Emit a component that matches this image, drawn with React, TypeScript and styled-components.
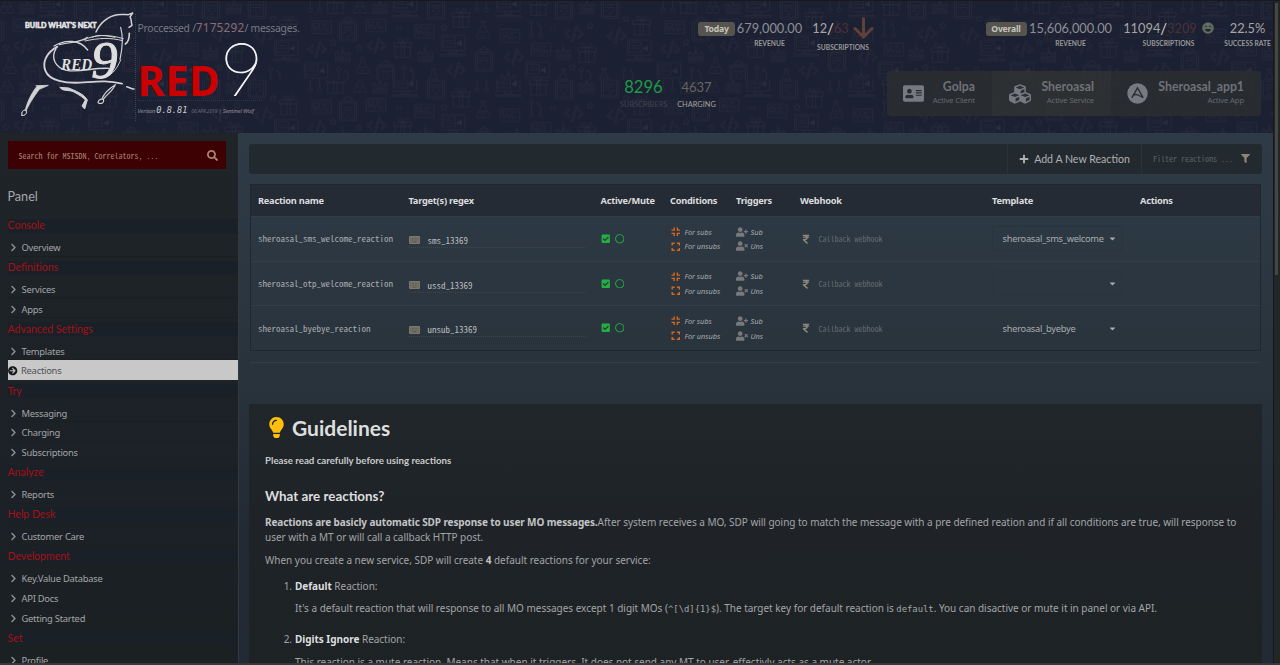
import React from "react";
import styled, { createGlobalStyle } from "styled-components";
import {
  FaAddressCard,
  FaArrowCircleRight,
  FaCaretDown,
  FaCheckSquare,
  FaChevronRight,
  FaCubes,
  FaFilter,
  FaLightbulb,
  FaPlus,
  FaRegCircle,
  FaRupeeSign,
  FaSearch,
  FaUserPlus,
  FaUserTimes,
} from "react-icons/fa";

const sans = `"Noto Sans", "Open Sans", sans-serif`;
const lato = `Lato, "Noto Sans", sans-serif`;
const mono = `"Noto Sans Mono CJK SC", "Liberation Mono", monospace`;

const GlobalStyle = createGlobalStyle`
  * { box-sizing: border-box; }
  html, body { margin: 0; padding: 0; background: #1c2124; overflow: hidden; }
  body { font-family: ${sans}; font-size: 10px; color: #a3a5a7; }
  p, h1, h2, h3, ol { margin: 0; padding: 0; font-weight: inherit; }
`;

/* ---------- frame ---------- */

const Frame = styled.div`
  width: 1280px;
  height: 665px;
  display: grid;
  grid-template-columns: 1273px 7px;
  overflow: hidden;
  border-top: 1px solid #17191d;
  border-bottom: 2px solid #34383a;
`;

const Page = styled.div`
  display: flex;
  flex-direction: column;
  min-height: 0;
  overflow: hidden;
`;

const ScrollTrack = styled.div`
  background: #222624;
  border-left: 1px solid #14171c;
  padding: 2px 0 0 1px;
`;

const ScrollThumb = styled.div`
  width: 2.5px;
  height: 272px;
  background: #464743;
`;

/* ---------- header ---------- */

const Header = styled.header`
  position: relative;
  height: 132px;
  flex: none;
  display: flex;
  background: #1b2033;
  overflow: hidden;
  font-family: ${lato};
`;

const Backdrop = styled.svg`
  position: absolute;
  inset: 0;
`;

const Logo = styled.svg`
  position: relative;
  width: 135px;
  height: 132px;
  flex: none;
`;

const Brand = styled.div`
  position: relative;
  width: 200px;
  flex: none;
  margin-top: 13px;
  height: 107px;
  border-left: 1px dotted #3f4452;
  padding-left: 1.5px;
`;

const Processed = styled.div`
  font-family: ${sans};
  font-size: 10.4px;
  letter-spacing: -0.25px;
  line-height: 14px;
  padding-top: 5.5px;
  height: 25px;
  color: #777a83;
  white-space: nowrap;
  b {
    font-weight: 400;
    font-size: 11.8px;
    letter-spacing: 0.2px;
    color: #8b6c76;
  }
`;

const Wordmark = styled.div`
  display: flex;
  align-items: baseline;
  width: 124px;
  height: 62px;
  border-bottom: 1px dotted #323747;
  line-height: 57px;
  font-family: ${sans};
  font-size: 41.6px;
  letter-spacing: 0.5px;
  font-weight: 700;
  color: #cc0000;
  span {
    margin-left: 0;
    font-family: ${lato};
    font-size: 75px;
    font-weight: 100;
    color: #f4f4f6;
    -webkit-text-stroke: 0.8px #f4f4f6;
  }
`;

const Version = styled.div`
  margin-top: 3.5px;
  display: flex;
  align-items: baseline;
  font-family: ${sans};
  font-size: 5.9px;
  font-style: italic;
  letter-spacing: -0.2px;
  color: #8d8f96;
  white-space: nowrap;
  b {
    margin: 0 4px 0 1px;
    font: italic 400 8.6px "DejaVu Sans Mono", monospace;
    letter-spacing: 0;
    color: #d0d0d4;
  }
  small {
    margin-right: 1px;
    font-size: 5.1px;
    color: #676a74;
  }
`;

const Totals = styled.div`
  position: relative;
  flex: none;
  width: 101px;
  margin: 76px 0 0 280px;
  display: flex;
  gap: 6px;
`;

const Total = styled.div<{ $size: number; $color: string; $label: string; $w: number }>`
  width: ${(p) => p.$w}px;
  display: flex;
  flex-direction: column;
  align-items: center;
  font-size: ${(p) => p.$size}px;
  line-height: 20px;
  color: ${(p) => p.$color};
  small {
    font-size: 7.4px;
    line-height: 15px;
    color: ${(p) => p.$label};
  }
`;

const Overviews = styled.div`
  position: relative;
  flex: none;
  width: 575px;
  margin-left: -18px;
  padding-top: 17px;
`;

const StatsRow = styled.div`
  display: flex;
  height: 53px;
  align-items: flex-start;
`;

const StatGroup = styled.div`
  display: flex;
  width: 288px;
`;

const Badge = styled.span<{ $w: number }>`
  width: ${(p) => p.$w}px;
  height: 14px;
  margin: 4px 2px 0 0;
  border-radius: 3px;
  background: #56544e;
  color: #c6c4be;
  font: 700 8.6px/14px ${sans};
  letter-spacing: -0.2px;
  text-align: center;
`;

const Stat = styled.div<{ $w: number; $gap?: number; $drop?: number }>`
  width: ${(p) => p.$w}px;
  margin-left: ${(p) => p.$gap ?? 0}px;
  display: flex;
  flex-direction: column;
  align-items: center;
  font-size: 12.8px;
  line-height: 20px;
  color: #8d8f94;
  white-space: nowrap;
  small {
    margin-top: ${(p) => p.$drop ?? 0}px;
    font-size: 6.7px;
    font-weight: 700;
    line-height: 10px;
    color: #999997;
  }
`;

const Figures = styled.span<{ $muted?: string }>`
  display: flex;
  align-items: center;
  height: 20px;
  color: #a8a6a0;
  i {
    font-style: normal;
    font-size: 15px;
    color: #cfccc4;
  }
  em {
    font-style: normal;
    color: ${(p) => p.$muted ?? "#4b3136"};
  }
`;

const Crumbs = styled.div`
  display: grid;
  grid-template-columns: 105px 119px 150px;
  width: 374px;
  height: 45px;
  margin-left: 189px;
  border-radius: 3px;
  overflow: hidden;
  background: rgba(44, 46, 48, 0.8);
`;

const Crumb = styled.div<{ $lit?: boolean; $inset?: number }>`
  position: relative;
  display: flex;
  align-items: center;
  justify-content: space-between;
  padding: 0 17px 0 ${(p) => p.$inset ?? 16}px;
  background: ${(p) => (p.$lit ? "rgba(60, 60, 58, 0.3)" : "transparent")};
  color: #777a81;
  & + &::before {
    content: "";
    position: absolute;
    left: -4px;
    top: 18px;
    width: 8px;
    height: 8px;
    transform: rotate(45deg);
    background: #292c31;
    border: solid #35373a;
    border-width: 1px 1px 0 0;
  }
`;

const CrumbText = styled.div`
  display: flex;
  flex-direction: column;
  align-items: flex-end;
  margin-bottom: 2px;
  font-size: 12.3px;
  line-height: 15px;
  font-weight: 700;
  color: #6f7277;
  small {
    font: 400 7.7px/13px ${sans};
    letter-spacing: -0.15px;
    color: #66696e;
  }
`;

/* ---------- sidebar ---------- */

const Body = styled.div`
  flex: 1;
  min-height: 0;
  display: flex;
`;

const Sidebar = styled.aside`
  width: 239px;
  flex: none;
  padding: 8px 0 0 7.5px;
  background: linear-gradient(#1e2427, #1b2126 70%, #1b2022);
  border-right: 1px solid #33393d;
  overflow: hidden;
`;

const SearchBox = styled.div`
  display: flex;
  align-items: center;
  justify-content: space-between;
  width: 218.5px;
  height: 28px;
  padding: 0 8px 0 11px;
  background: #3d0104;
  color: #a98575;
  font: 8px ${mono};
`;

const PanelTitle = styled.h2`
  margin-top: 18px;
  height: 27.8px;
  font: 400 12.6px/20px ${lato};
  color: #a6a8aa;
`;

const Section = styled.section`
  display: flow-root;
`;

const SectionTitle = styled.h3`
  height: 13.9px;
  margin: 4px 0;
  padding-top: 0.6px;
  background: #1a2027;
  font: 400 10.6px/13.9px ${lato};
  letter-spacing: -0.05px;
  color: #a31016;
`;

const NavItem = styled.div<{ $active?: boolean }>`
  display: flex;
  align-items: center;
  height: 19.95px;
  padding-top: ${(p) => (p.$active ? 2.5 : 3)}px;
  border-bottom: 1px solid ${(p) => (p.$active ? "#c8c8c8" : "#1a1f23")};
  background: ${(p) => (p.$active ? "#c8c8c8" : "transparent")};
  color: ${(p) => (p.$active ? "#4d5155" : "#a3a5a7")};
  font-size: 9.4px;
  letter-spacing: -0.25px;
  svg {
    flex: none;
    margin: 0 ${(p) => (p.$active ? 3.5 : 4)}px 0 ${(p) => (p.$active ? 0.5 : 1)}px;
    color: ${(p) => (p.$active ? "#16191b" : "#8e9092")};
  }
`;

/* ---------- main ---------- */

const Main = styled.main`
  flex: 1;
  min-width: 0;
  padding: 9.5px 11px 0 10px;
  background: linear-gradient(#2e3b47, #29333c 45%, #222b35 75%, #222b35);
  border-top: 1px solid #2f3b45;
  overflow: hidden;
`;

const Toolbar = styled.div`
  display: flex;
  justify-content: flex-end;
  height: 30px;
  border-radius: 3px;
  background: #22292f;
`;

const AddButton = styled.div`
  display: flex;
  align-items: center;
  justify-content: center;
  gap: 5px;
  width: 135px;
  border-left: 1px solid #293139;
  border-right: 1px solid #293139;
  font: 400 10.6px ${lato};
  color: #b0b1b2;
`;

const FilterBox = styled.div`
  display: flex;
  align-items: center;
  justify-content: space-between;
  width: 120px;
  padding: 0 12px 0 11px;
  font: 8px ${mono};
  color: #5d6368;
  svg { color: #8e8673; }
`;

const Table = styled.div`
  margin: 10px 1px 0;
  border: 1px solid #20272e;
`;

const HeadRow = styled.div`
  display: grid;
  grid-template-columns: 150.5px 192px 69.5px 66px 64px 192px 148px 1fr;
  align-items: center;
  height: 31.5px;
  padding-left: 7px;
  background: #242b34;
  font-size: 9.25px;
  font-weight: 700;
  letter-spacing: -0.24px;
  color: #dcddde;
`;

const Row = styled(HeadRow)`
  height: 44.7px;
  border-top: 1px solid #333d46;
  background: transparent;
  font-weight: 400;
  color: #a9abad;
`;

const ReactionName = styled.div`
  font: 9px ${mono};
  letter-spacing: 0;
`;

const Target = styled.div`
  display: flex;
  align-items: center;
  gap: 8px;
  width: 177px;
  height: 17px;
  margin-top: 1px;
  padding-top: 3px;
  border-bottom: 1px dotted #3d464d;
  font: 9px/13px ${mono};
  letter-spacing: 0;
  color: #bcbdbe;
  svg { color: #7d786b; }
`;

const Toggles = styled.div`
  display: flex;
  gap: 4.5px;
  align-items: center;
  color: #22b140;
`;

const Pair = styled.div`
  display: flex;
  flex-direction: column;
`;

const PairLine = styled.div<{ $tone: string; $gap: number; $inset?: number }>`
  display: flex;
  align-items: center;
  gap: ${(p) => p.$gap}px;
  height: 14.8px;
  padding: 0.5px 0 0 ${(p) => p.$inset ?? 0}px;
  font-size: 7.4px;
  font-style: italic;
  letter-spacing: -0.05px;
  svg { color: ${(p) => p.$tone}; }
`;

const Webhook = styled.div`
  display: flex;
  align-items: center;
  gap: 7.5px;
  padding-left: 1px;
  font: 8px ${mono};
  letter-spacing: 0;
  color: #646a70;
  svg { color: #8f897b; }
`;

const Select = styled.div`
  display: flex;
  align-items: center;
  justify-content: space-between;
  width: 131px;
  height: 25px;
  padding: 0 5px 0 9.5px;
  border: 1px solid #2a343d;
  border-radius: 3px;
  letter-spacing: -0.24px;
`;

const Divider = styled.div`
  height: 1px;
  margin: 10.5px 1px 41.5px;
  background: #333d46;
`;

const Guide = styled.section`
  height: 300px;
  padding: 10.5px 16px;
  background: linear-gradient(#20262a, #1f2327 40%, #1d2224);
  line-height: 15px;
`;

const GuideTitle = styled.h1`
  display: flex;
  align-items: center;
  gap: 5px;
  height: 25px;
  padding-left: 1px;
  font: 700 21px/25px ${lato};
  color: #dddedf;
  svg { color: #ffbf0c; }
`;

const GuideLead = styled.p`
  margin-top: 13.5px;
  font: 700 9.7px/14px ${lato};
  color: #c9cacb;
`;

const GuideHeading = styled.h2`
  margin-top: 19.5px;
  font: 700 13.4px/18px ${lato};
  color: #dddedf;
`;

const Paragraph = styled.p<{ $top: number; $tight?: boolean }>`
  margin-top: ${(p) => p.$top}px;
  letter-spacing: ${(p) => (p.$tight ? "-0.03px" : "-0.015px")};
  b {
    letter-spacing: ${(p) => (p.$tight ? "-0.115px" : "0")};
    color: #c3c4c5;
  }
  code { font: 8.9px "DejaVu Sans Mono", monospace; }
`;

const ListItem = styled.div<{ $top: number }>`
  display: grid;
  grid-template-columns: 30px 1fr;
  margin-top: ${(p) => p.$top}px;
  letter-spacing: -0.03px;
  span {
    text-align: right;
    padding-right: 3px;
  }
  b { color: #dddedf; }
`;

/* ---------- header backdrop ---------- */

const glyphs: Record<string, React.ReactNode> = {
  clip: (
    <>
      <rect x="-26" y="-25" width="52" height="58" rx="3" />
      <rect x="-20" y="-19" width="40" height="46" />
      <path d="M-12-25v-8h6a6 6 0 0 1 12 0h6v8zM-14-8h28M-14 0h26M-14 8h12M-6 16l6 5 14-16" />
    </>
  ),
  monitor: (
    <>
      <rect x="-35" y="-30" width="70" height="46" rx="2" />
      <path d="M-30-24h36v30h-36zM-24-14h22M-24-6h26M-8 16l-3 8h22l-3-8M-38 28h76v5h-76z" />
      <path d="M12-8h8v-5h4v14h-4v-4h-8z" fill="#2c3140" />
    </>
  ),
  gift: (
    <path d="M-27-14h54v12h-54zM-23-2h46v32h-46zM-5-14v44M5-14v44M0-14c-20-2-18-16-8-12 5 2 8 8 8 12 0-4 3-10 8-12 10-4 12 10-8 12z" />
  ),
  flask: (
    <path d="M-7-25h14M-4-25v14l-15 27c-2 5 0 8 4 8h30c4 0 6-3 4-8l-15-27v-14M-12 6h24M-8 12l6 6 8-5" />
  ),
  cal: (
    <path d="M-21-10h8v6h10v-6h8v6h8v-6h8v28h-42zM-15 2h8v10h-8zM-3 2h7v10h-7zM9 2h7v10h-7zM0-28v14M-5-18l5 6 5-6" />
  ),
  pipes: (
    <>
      <circle cx="-14" cy="-22" r="6" />
      <circle cx="-14" cy="18" r="6" />
      <circle cx="14" cy="18" r="6" />
      <path d="M-14-16v28M14 12v-20q0-9-10-9M9-23l-6 6 6 6" />
    </>
  ),
  card: (
    <path d="M-29-19h58v38h-58zM-23-11h16v10h-16zM0-10h22M0-4h14M-22 10h8M-8 10h8M6 10h16M-24 4h46" />
  ),
  code: <path d="M-14-15l-16 15 16 13v-6l-10-7 10-9zM14-15l16 15-16 13v-6l10-7-10-9zM6-24L-8 22h5L11-24z" />,
  star: <path d="M0-9l3 6 7 1-5 5 1 7-6-4-6 4 1-7-5-5 7-1z" />,
  brace: <path d="M-4-6q-6 6 0 12M4-6q6 6 0 12" />,
};

const doodles: [string, number, number][] = [
  ["pipes", 45, 12], ["gift", 106, 10], ["flask", 180, 14], ["cal", 240, 22], ["monitor", 315, 18],
  ["clip", 408, 24], ["gift", 483, 52], ["pipes", 545, 12], ["monitor", 625, 18], ["gift", 715, 16],
  ["clip", 792, 24], ["cal", 860, 22], ["clip", 930, 22],
  ["card", 65, 82], ["clip", 144, 90], ["card", 228, 76], ["brace", 298, 84], ["card", 373, 94],
  ["star", 432, 82], ["monitor", 460, 135], ["flask", 550, 90], ["card", 630, 107], ["pipes", 708, 88],
  ["brace", 758, 87], ["code", 822, 102], ["star", 870, 76], ["star", 978, 55], ["gift", 1025, 75],
  ["code", 52, 148], ["star", 100, 126], ["cal", 128, 168], ["star", 177, 142], ["code", 230, 138],
  ["gift", 308, 142], ["cal", 376, 166], ["clip", 552, 181], ["code", 643, 172], ["card", 723, 148],
  ["cal", 790, 160], ["gift", 861, 157], ["code", 950, 108], ["monitor", 1018, 150],
  ["monitor", 48, 218], ["pipes", 130, 230], ["flask", 188, 196], ["clip", 257, 221], ["pipes", 326, 226],
  ["flask", 400, 232], ["code", 468, 212], ["cal", 625, 236], ["monitor", 712, 216], ["flask", 790, 232],
  ["star", 818, 201], ["pipes", 858, 230], ["flask", 912, 230], ["pipes", 985, 230],
];

const HeaderBackdrop = () => (
  <Backdrop width="1273" height="132">
    <defs>
      <pattern
        id="doodles"
        width="1059"
        height="239"
        patternUnits="userSpaceOnUse"
        patternTransform="translate(300 -1) scale(0.3333)"
      >
        <g fill="none" stroke="#262a38" strokeWidth="2.6">
          {doodles.map(([kind, x, y], i) => (
            <g key={i} transform={`translate(${x} ${y})`}>
              {glyphs[kind]}
            </g>
          ))}
        </g>
      </pattern>
    </defs>
    <rect width="1273" height="132" fill="url(#doodles)" />
  </Backdrop>
);

const HorseLogo = () => (
  <Logo viewBox="0 3 405 396">
    <text
      x="75"
      y="85"
      fontFamily="Lato, sans-serif"
      fontWeight="900"
      fontSize="21"
      textLength="215"
      lengthAdjust="spacingAndGlyphs"
      fill="#e6e6e6"
      stroke="#e6e6e6"
      strokeWidth="1.4"
    >
      BUILD WHAT'S NEXT
    </text>
    <g fill="none" stroke="#d2d2d5" strokeWidth="4.5" strokeLinecap="round" strokeLinejoin="round">
      <path d="M288 96C300 68 325 48 352 44C366 42 378 44 385 44L398 39L390 51C396 58 392 64 396 76L387 82" />
      <path d="M388 100C388 115 386 126 376 132" strokeWidth="5" />
      <path d="M362 82C370 110 366 150 360 178" strokeWidth="3.5" />
      <path d="M252 120C280 104 325 102 370 116M255 123C295 114 330 112 368 122M276 112C300 100 330 110 345 112" strokeWidth="3" />
      <path d="M162 138C195 118 240 118 263 150" strokeWidth="4" />
      <path d="M178 134C220 124 245 128 262 112" strokeWidth="4" />
      <path d="M172 140C140 158 126 185 136 212C148 244 200 250 240 248C290 245 320 240 366 251" strokeWidth="5.5" />
      <path d="M168 146C152 172 164 203 200 211C240 218 275 203 326 205" strokeWidth="4" />
      <path d="M362 180C350 206 344 214 328 226" strokeWidth="3" />
      <path d="M108 257L145 256L118 268C108 282 94 300 80 328C80 342 74 348 66 346C64 336 68 330 76 330C80 312 92 282 110 260" fill="#d2d2d5" strokeWidth="2.5" />
      <path d="M66 346C64 336 68 331 76 330L80 336C78 344 72 348 66 346Z" fill="#1b2033" strokeWidth="3" />
      <path d="M180 263C192 276 206 268 222 276C236 284 250 292 256 300L246 318L254 327L262 300C252 282 226 272 206 264Z" fill="#d2d2d5" strokeWidth="3" />
      <path d="M346 254C336 276 318 284 310 298M346 254C330 264 314 276 306 296M310 298C314 308 304 314 294 308C294 300 302 296 310 298" strokeWidth="3.4" />
      <path d="M380 260C390 262 394 268 402 267" />
    </g>
    <text
      x="183"
      y="210"
      fontFamily="'Liberation Serif', serif"
      fontStyle="italic"
      fontWeight="700"
      fontSize="47"
      textLength="94"
      lengthAdjust="spacingAndGlyphs"
      fill="#dededf"
    >
      RED
    </text>
    <text
      x="274"
      y="235"
      fontFamily="'Liberation Serif', serif"
      fontStyle="italic"
      fontSize="158"
      fill="#dededf"
      stroke="#dededf"
      strokeWidth="3"
    >
      9
    </text>
  </Logo>
);

const ArrowMark = styled.svg`
  margin-left: 4px;
`;

const DownArrow = () => (
  <ArrowMark width="21" height="22" viewBox="0 0 21 22">
    <path d="M10.5 1.5V20M2 11.5l8.5 8.5L19 11.5" fill="none" stroke="#604038" strokeWidth="3" strokeLinecap="round" />
  </ArrowMark>
);

const SmileyMark = styled.svg`
  margin-left: 5px;
`;

const Smiley = () => (
  <SmileyMark width="12" height="12" viewBox="0 0 12 12">
    <circle cx="6" cy="6" r="5.8" fill="#606c5c" />
    <path d="M2.7 4.8q1.2-1.5 2.4 0M6.9 4.8q1.2-1.5 2.4 0" fill="none" stroke="#20263a" strokeWidth="0.9" />
    <path d="M3 7h6q-.5 2.8-3 2.8T3 7z" fill="#20263a" />
  </SmileyMark>
);

const AppMark = () => (
  <svg width="21" height="21" viewBox="0 0 21 21">
    <circle cx="10.5" cy="10.5" r="10.2" fill="#777a81" />
    <path d="M4.8 14.8L10.5 4.8l5.7 10M5.5 12.8q3-2.2 5.5-.8t4.5 2" fill="none" stroke="#2a2d33" strokeWidth="1.4" />
  </svg>
);

const KeyboardIcon = () => (
  <svg width="11" height="8" viewBox="0 0 33 24">
    <rect width="33" height="24" rx="3" fill="currentColor" />
    <path d="M4 6.500h25M4 12h25" stroke="#2b343d" strokeWidth="2.600" strokeDasharray="2.600 1.900" opacity="0.75" />
    <path d="M4 18h3M10 18h13M26 18h3" stroke="#2b343d" strokeWidth="2.400" opacity="0.75" />
  </svg>
);

const CompressIcon = () => (
  <svg width="9.5" height="9.5" viewBox="0 0 19 19" fill="none" stroke="currentColor" strokeWidth="2.8">
    <path d="M1 6.3h5.3V1M12.7 1v5.3H18M18 12.7h-5.3V18M6.3 18v-5.3H1" />
  </svg>
);

const ExpandIcon = () => (
  <svg width="9.5" height="9.5" viewBox="0 0 19 19" fill="none" stroke="currentColor" strokeWidth="2.8">
    <path d="M2.4 7.2V2.4h4.8M11.8 2.4h4.8v4.8M16.6 11.8v4.8h-4.8M7.2 16.6H2.4v-4.8" />
  </svg>
);

/* ---------- data ---------- */

const sections: { title: string; items: string[] }[] = [
  { title: "Console", items: ["Overview"] },
  { title: "Definitions", items: ["Services", "Apps"] },
  { title: "Advanced Settings", items: ["Templates", "Reactions"] },
  { title: "Try", items: ["Messaging", "Charging", "Subscriptions"] },
  { title: "Analyze", items: ["Reports"] },
  { title: "Help Desk", items: ["Customer Care"] },
  { title: "Development", items: ["Key.Value Database", "API Docs", "Getting Started"] },
  { title: "Set", items: ["Profile"] },
];

const columns = ["Reaction name", "Target(s) regex", "Active/Mute", "Conditions", "Triggers", "Webhook", "Template", "Actions"];

const reactions = [
  { name: "sheroasal_sms_welcome_reaction", target: "sms_13369", template: "sheroasal_sms_welcome" },
  { name: "sheroasal_otp_welcome_reaction", target: "ussd_13369", template: "" },
  { name: "sheroasal_byebye_reaction", target: "unsub_13369", template: "sheroasal_byebye" },
];

export default function App() {
  return (
    <Frame>
      <GlobalStyle />
      <Page>
        <Header>
          <HeaderBackdrop />
          <HorseLogo />
          <Brand>
            <Processed>
              Proccessed /<b>7175292</b>/ messages.
            </Processed>
            <Wordmark>
              RED<span>9</span>
            </Wordmark>
            <Version>
              Verison <b>0.8.81</b> <small>06.APR.2019</small> | Sentinel Wolf
            </Version>
          </Brand>
          <Totals>
            <Total $size={16.6} $color="#219a46" $label="#3e434e" $w={57}>
              8296<small>SUBSCRIBERS</small>
            </Total>
            <Total $size={13} $color="#68665f" $label="#a3a09a" $w={37}>
              4637<small>CHARGING</small>
            </Total>
          </Totals>
          <Overviews>
            <StatsRow>
              <StatGroup>
                <Badge $w={37}>Today</Badge>
                <Stat $w={65}>
                  679,000.00<small>REVENUE</small>
                </Stat>
                <Stat $w={62} $gap={10} $drop={4}>
                  <Figures>
                    12<i>/</i>
                    <em>63</em>
                    <DownArrow />
                  </Figures>
                  <small>SUBSCRIPTIONS</small>
                </Stat>
              </StatGroup>
              <StatGroup>
                <Badge $w={41}>Overall</Badge>
                <Stat $w={84}>
                  15,606,000.00<small>REVENUE</small>
                </Stat>
                <Stat $w={92} $gap={10}>
                  <Figures>
                    11094<i>/</i>
                    <em>3209</em>
                    <Smiley />
                  </Figures>
                  <small>SUBSCRIPTIONS</small>
                </Stat>
                <Stat $w={48} $gap={9}>
                  <Figures>22.5%</Figures>
                  <small>SUCCESS RATE</small>
                </Stat>
              </StatGroup>
            </StatsRow>
            <Crumbs>
              <Crumb>
                <FaAddressCard size={21} />
                <CrumbText>
                  Golpa<small>Active Client</small>
                </CrumbText>
              </Crumb>
              <Crumb $lit $inset={17}>
                <FaCubes size={22} />
                <CrumbText>
                  Sheroasal<small>Active Service</small>
                </CrumbText>
              </Crumb>
              <Crumb>
                <AppMark />
                <CrumbText>
                  Sheroasal_app1<small>Active App</small>
                </CrumbText>
              </Crumb>
            </Crumbs>
          </Overviews>
        </Header>
        <Body>
          <Sidebar>
            <SearchBox>
              Search for MSISDN, Correlators, ...
              <FaSearch size={11} />
            </SearchBox>
            <PanelTitle>Panel</PanelTitle>
            {sections.map((s) => (
              <Section key={s.title}>
                <SectionTitle>{s.title}</SectionTitle>
                {s.items.map((item) => {
                  const active = item === "Reactions";
                  return (
                    <NavItem key={item} $active={active}>
                      {active ? <FaArrowCircleRight size={9.5} /> : <FaChevronRight size={9} />}
                      {item}
                    </NavItem>
                  );
                })}
              </Section>
            ))}
          </Sidebar>
          <Main>
            <Toolbar>
              <AddButton>
                <FaPlus size={10} />
                Add A New Reaction
              </AddButton>
              <FilterBox>
                Filter reactions ...
                <FaFilter size={9} />
              </FilterBox>
            </Toolbar>
            <Table>
              <HeadRow>
                {columns.map((c) => (
                  <div key={c}>{c}</div>
                ))}
              </HeadRow>
              {reactions.map((r) => (
                <Row key={r.name}>
                  <ReactionName>{r.name}</ReactionName>
                  <Target>
                    <KeyboardIcon />
                    {r.target}
                  </Target>
                  <Toggles>
                    <FaCheckSquare size={9.5} />
                    <FaRegCircle size={9.5} />
                  </Toggles>
                  <Pair>
                    <PairLine $tone="#d9681d" $gap={4} $inset={1}>
                      <CompressIcon />
                      For subs
                    </PairLine>
                    <PairLine $tone="#d9681d" $gap={4} $inset={1}>
                      <ExpandIcon />
                      For unsubs
                    </PairLine>
                  </Pair>
                  <Pair>
                    <PairLine $tone="#77797b" $gap={2.5}>
                      <FaUserPlus size={12} />
                      Sub
                    </PairLine>
                    <PairLine $tone="#77797b" $gap={2.5}>
                      <FaUserTimes size={12} />
                      Uns
                    </PairLine>
                  </Pair>
                  <Webhook>
                    <FaRupeeSign size={10} />
                    Callback webhook
                  </Webhook>
                  <Select>
                    <span>{r.template}</span>
                    <FaCaretDown size={9} />
                  </Select>
                </Row>
              ))}
            </Table>
            <Divider />
            <Guide>
              <GuideTitle>
                <FaLightbulb size={21} />
                Guidelines
              </GuideTitle>
              <GuideLead>Please read carefully before using reactions</GuideLead>
              <GuideHeading>What are reactions?</GuideHeading>
              <Paragraph $top={10.5} $tight>
                <b>Reactions are basicly automatic SDP response to user MO messages.</b>After system receives a MO, SDP
                will going to match the message with a pre defined reation and if all conditions are true, will response
                to user with a MT or will call a callback HTTP post.
              </Paragraph>
              <Paragraph $top={8}>
                When you create a new service, SDP will create <b>4</b> default reactions for your service:
              </Paragraph>
              <ListItem $top={10.5}>
                <span>1.</span>
                <div>
                  <b>Default</b> Reaction:
                  <Paragraph $top={7.5}>
                    It's a default reaction that will response to all MO messages except 1 digit MOs (
                    <code>^[\d]{"{1}"}$</code>). The target key for default reaction is <code>default</code>. You can
                    disactive or mute it in panel or via API.
                  </Paragraph>
                </div>
              </ListItem>
              <ListItem $top={16}>
                <span>2.</span>
                <div>
                  <b>Digits Ignore</b> Reaction:
                  <Paragraph $top={8}>
                    This reaction is a mute reaction. Means that when it triggers, It does not send any MT to user,
                    effectivly acts as a mute actor
                  </Paragraph>
                </div>
              </ListItem>
            </Guide>
          </Main>
        </Body>
      </Page>
      <ScrollTrack>
        <ScrollThumb />
      </ScrollTrack>
    </Frame>
  );
}
